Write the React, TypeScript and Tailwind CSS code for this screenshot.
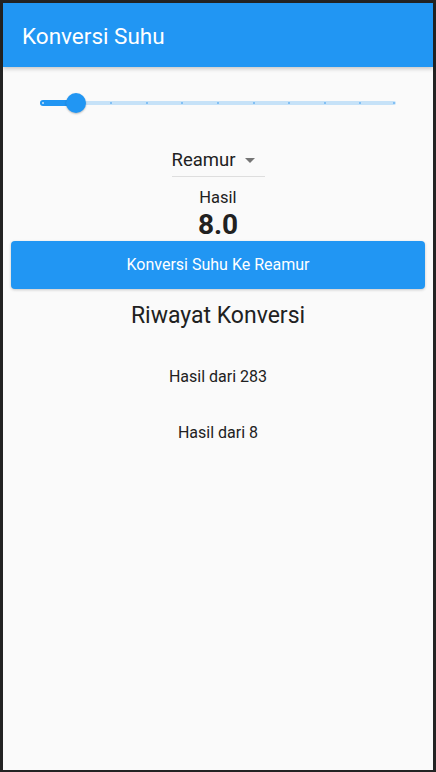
import React, { useState } from "react";

const riwayat = [283, 8];
const steps = 10;

export default function App() {
  const [value] = useState(1);
  const pct = (value / steps) * 100;

  return (
    <div className="h-[772px] w-[436px] bg-[#232323] pt-[3px] px-[3px] pb-[2px]" style={{ fontFamily: "Roboto, 'Noto Sans', sans-serif" }}>
      <div className="flex h-full flex-col bg-[#fafafa] text-[#212121]">
        {/* App bar */}
        <header className="relative z-10 flex h-16 shrink-0 items-center bg-[#2196f3] pl-[19px] shadow-[0_2px_4px_rgba(0,0,0,0.2)]">
          <h1 className="pt-[2px] text-[22.5px] leading-7 text-white">Konversi Suhu</h1>
        </header>

        {/* Slider */}
        <div className="mx-[37px] mt-4 flex h-10 items-center">
          <div className="relative h-5 w-full">
            <div className="absolute left-0 right-0 top-[8px] h-1 rounded-full bg-[#c6e2f8]" />
            <div className="absolute left-0 top-[7px] h-[6px] rounded-l-full bg-[#2196f3]" style={{ width: `${pct}%` }} />
            {Array.from({ length: steps + 1 }).map((_, i) => (
              <div
                key={i}
                className={"absolute top-[9px] h-[2px] w-[2px] rounded-full " + (i <= value ? "bg-[#c6e2f8]" : "bg-[#6cb4f3]")}
                style={{ left: `calc(${(i / steps) * 100}% - ${i === 0 ? -2 : i === steps ? 3 : 1}px)` }}
              />
            ))}
            <div
              className="absolute top-0 h-5 w-5 rounded-full bg-[#2196f3] shadow-[0_1px_2px_rgba(0,0,0,0.25)]"
              style={{ left: `calc(${pct}% - 10px)` }}
            />
          </div>
        </div>

        {/* Dropdown */}
        <div className="mt-[25px] flex justify-center">
          <button className="flex w-[93px] flex-col border-b border-[#dedede] pb-[4px]">
            <span className="flex items-center justify-between">
              <span className="text-[18.5px] leading-6">Reamur</span>
              <svg width="24" height="24" viewBox="0 0 24 24" className="mr-[3px] fill-[#757575]">
                <path d="M7 10l5 5 5-5z" />
              </svg>
            </span>
          </button>
        </div>

        <p className="mt-[11px] text-center text-[16.5px] leading-5">Hasil</p>
        <p className="mt-[1px] text-center text-[28px] font-bold leading-8">8.0</p>

        <button className="mx-[8px] mt-0 h-12 rounded bg-[#2196f3] text-[16px] text-white shadow-[0_1px_3px_rgba(0,0,0,0.2)]">
          Konversi Suhu Ke Reamur
        </button>

        <h2 className="mt-[13px] text-center text-[23px] leading-7">Riwayat Konversi</h2>

        <ul className="mt-[19px]">
          {riwayat.map((r, i) => (
            <li key={i} className="flex h-14 items-center justify-center text-[16px] leading-5">
              Hasil dari {r}
            </li>
          ))}
        </ul>
      </div>
    </div>
  );
}
